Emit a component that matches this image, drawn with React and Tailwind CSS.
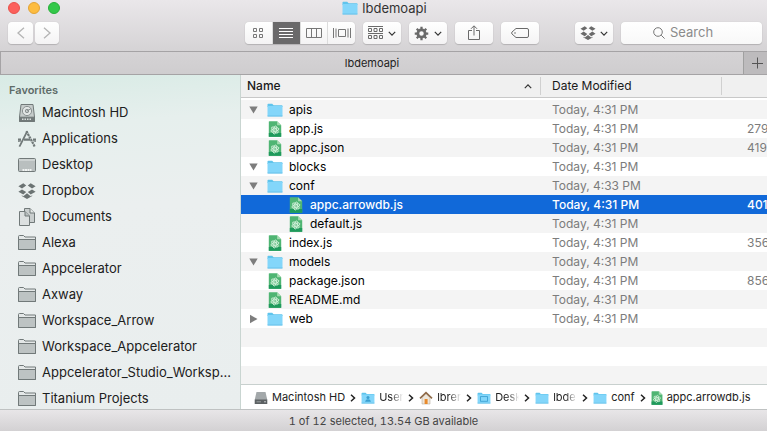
import { useState } from "react";
import clsx from "clsx";

const favorites = [
  { name: "Macintosh HD", icon: "disk" },
  { name: "Applications", icon: "apps" },
  { name: "Desktop", icon: "desktop" },
  { name: "Dropbox", icon: "dropbox" },
  { name: "Documents", icon: "documents" },
  { name: "Alexa", icon: "folder" },
  { name: "Appcelerator", icon: "folder" },
  { name: "Axway", icon: "folder" },
  { name: "Workspace_Arrow", icon: "folder" },
  { name: "Workspace_Appcelerator", icon: "folder" },
  { name: "Appcelerator_Studio_Worksp...", icon: "folder" },
  { name: "Titanium Projects", icon: "folder" },
];

const files = [
  { name: "apis", folder: true, open: true, date: "Today, 4:31 PM" },
  { name: "app.js", date: "Today, 4:31 PM", size: "279" },
  { name: "appc.json", date: "Today, 4:31 PM", size: "419" },
  { name: "blocks", folder: true, open: true, date: "Today, 4:31 PM" },
  { name: "conf", folder: true, open: true, date: "Today, 4:33 PM" },
  { name: "appc.arrowdb.js", nested: true, date: "Today, 4:31 PM", size: "401" },
  { name: "default.js", nested: true, date: "Today, 4:31 PM" },
  { name: "index.js", date: "Today, 4:31 PM", size: "356" },
  { name: "models", folder: true, open: true, date: "Today, 4:31 PM" },
  { name: "package.json", date: "Today, 4:31 PM", size: "856" },
  { name: "README.md", date: "Today, 4:31 PM" },
  { name: "web", folder: true, open: false, date: "Today, 4:31 PM" },
];

function BlueFolder({ mark, className }) {
  return (
    <svg viewBox="0 0 16 14" className={clsx("shrink-0", className)}>
      <path d="M0.5 1.6Q0.5 0.8 1.3 0.8H5.2L6.6 2.2H14.8Q15.5 2.2 15.5 3V4H0.5Z" fill="#5fc4ec" />
      <rect x="0.5" y="3" width="15" height="10.4" rx="0.6" fill="#83d6fa" />
      <path d="M0.5 13H15.5" stroke="#62bde4" strokeWidth="0.8" />
      {mark === "user" && (
        <g fill="#3a9fd0">
          <circle cx="8" cy="6.4" r="1.8" />
          <path d="M4.6 11.4Q5 8.6 8 8.6Q11 8.6 11.4 11.4Z" />
        </g>
      )}
      {mark === "desktop" && (
        <rect x="4" y="5.4" width="8" height="5.4" fill="none" stroke="#3a9fd0" />
      )}
    </svg>
  );
}

function FileIcon({ className }) {
  return (
    <svg viewBox="0 0 13 16" className={clsx("shrink-0", className)}>
      <path d="M0.3 0.8Q0.3 0.2 1 0.2H8.6L12.7 4.2V15.8H0.3Z" fill="#4fb573" />
      <path d="M0.3 12H12.7V15.8H0.3Z" fill="#1f9a5c" />
      <path d="M8.6 0.2L12.7 4.2H8.6Z" fill="#a5dbb0" />
      <g fill="none" stroke="#d8f3df" strokeWidth="0.8">
        <ellipse cx="6.4" cy="9" rx="1.7" ry="4.2" transform="rotate(12 6.4 9)" />
        <ellipse cx="6.4" cy="9" rx="1.7" ry="4.2" transform="rotate(72 6.4 9)" />
        <ellipse cx="6.4" cy="9" rx="1.7" ry="4.2" transform="rotate(132 6.4 9)" />
      </g>
      <circle cx="6.4" cy="9" r="0.8" fill="#eefaf0" />
    </svg>
  );
}

function DropboxIcon({ className }) {
  return (
    <svg viewBox="0 0 18 16" fill="currentColor" className={className}>
      <path d="M5.3 0.3L8.2 2.6L4 5.4L0.4 3.2Z" />
      <path d="M12.7 0.3L9.8 2.6L14 5.4L17.6 3.2Z" />
      <path d="M4 6.4L8.2 9L5.3 11.6L0.4 8.8Z" />
      <path d="M14 6.4L9.8 9L12.7 11.6L17.6 8.8Z" />
      <path d="M9 10.2L12.7 13.2L14.2 12.2V13L9 16L3.8 13V12.2L5.3 13.2Z" />
    </svg>
  );
}

function SidebarIcon({ type }) {
  if (type === "dropbox") {
    return <DropboxIcon className="h-4 w-[18px] shrink-0 text-[#6b7373]" />;
  }
  return (
    <svg
      viewBox="0 0 18 18"
      fill="none"
      stroke="#717979"
      className="h-[18px] w-[18px] shrink-0"
    >
      {type === "disk" && (
        <>
          <path d="M3 0.5H15L16.5 13V17.5H1.5V13Z" fill="#c6cccb" />
          <path d="M1.5 13.2H16.5V17.3H1.5Z" fill="#727a7a" />
          <path d="M4 15.3H14" stroke="#d9dedd" strokeDasharray="1.5 1" strokeWidth="1.6" />
          <circle cx="9" cy="7" r="4.6" fill="#e3e7e6" stroke="#8a9191" />
          <circle cx="9" cy="7" r="1.7" fill="#c6cccb" stroke="#8a9191" />
          <path d="M9 7L13 4.6" stroke="#8a9191" />
        </>
      )}
      {type === "apps" && (
        <>
          <path d="M9.3 1.2L2.6 14.4L1.4 16.6" strokeWidth="1.8" />
          <path d="M8.4 1.2L15.6 14.4L16.6 16.6" strokeWidth="2.2" strokeDasharray="2.4 0.6" />
          <path d="M0 9.6H3M6 9.6H12M15 9.6H18" strokeWidth="2.4" />
          <path d="M0 11.4L3 11M15.6 11L18 11.4" />
        </>
      )}
      {type === "desktop" && (
        <>
          <rect x="0.5" y="2.5" width="17" height="13" rx="1" fill="#b9bfbf" />
          <path d="M1 4H17" stroke="#e2e6e5" />
          <path d="M4.5 14H13.5" stroke="#f0f3f2" strokeWidth="2" strokeDasharray="2 0.5" />
        </>
      )}
      {type === "documents" && (
        <>
          <path d="M6.5 0.5H12L16.5 5V14.5H6.5Z" fill="#c9cece" />
          <path d="M12 0.5V5H16.5" fill="#e6eae9" />
          <path d="M1.5 3.5H7L11.5 8V17.5H1.5Z" fill="#dce0e0" />
          <path d="M7 3.5V8H11.5" fill="#b9bfbf" />
        </>
      )}
      {type === "folder" && (
        <>
          <path d="M0.5 15.5V2.5Q0.5 1.5 1.5 1.5H5.5L7 3H17.5V15.5Z" fill="#e4e8e8" />
          <path d="M0.5 5.5H17.5V15.5H0.5Z" fill="#bdc3c3" />
        </>
      )}
    </svg>
  );
}

function Chevron({ className }) {
  return (
    <svg viewBox="0 0 10 6" fill="none" stroke="#333" strokeWidth="1.5" className={clsx("h-[5px] w-2", className)}>
      <path d="M1 1L5 5L9 1" />
    </svg>
  );
}

function ToolButton({ label, className, children }) {
  return (
    <button
      type="button"
      aria-label={label}
      className={clsx(
        "flex h-[22px] shrink-0 items-center justify-center rounded bg-gradient-to-b from-white to-[#f4f3f4] text-[#6a6a6a] shadow-[0_1px_1px_#b3b1b3,0_0_1px_#bbb]",
        className
      )}
    >
      {children}
    </button>
  );
}

function ViewIcon({ type }) {
  return (
    <svg viewBox="0 0 18 12" fill="none" stroke="currentColor" className="h-3 w-[18px]">
      {type === "icons" && (
        <path d="M4.5 1.5h3v3h-3zM10.5 1.5h3v3h-3zM4.5 7.5h3v3h-3zM10.5 7.5h3v3h-3z" />
      )}
      {type === "list" && <path d="M2 1.5H16M2 4.5H16M2 7.5H16M2 10.5H16" />}
      {type === "columns" && <path d="M1.5 1.5h15v9h-15zM6.5 1.5v9M11.5 1.5v9" />}
      {type === "flow" && <path d="M5.5 2.5h7v7h-7zM0.5 1v10M3 1.5v9M15 1.5v9M17.5 1v10" />}
    </svg>
  );
}

function Toolbar() {
  const [view, setView] = useState("list");
  return (
    <div className="flex items-center gap-2 pt-[6px] pr-[5px] pb-[7px] pl-2">
      <div className="mr-[178px] flex gap-[2px]">
        <ToolButton label="Back" className="w-[25px]">
          <svg viewBox="0 0 8 12" fill="none" stroke="#b4b4b4" strokeWidth="1.3" className="h-3 w-2">
            <path d="M7 0.8L1 6L7 11.2" />
          </svg>
        </ToolButton>
        <ToolButton label="Forward" className="w-6">
          <svg viewBox="0 0 8 12" fill="none" stroke="#b4b4b4" strokeWidth="1.3" className="h-3 w-2">
            <path d="M1 0.8L7 6L1 11.2" />
          </svg>
        </ToolButton>
      </div>
      <div className="flex h-[22px] w-[110px] shrink-0 overflow-hidden rounded bg-gradient-to-b from-white to-[#f4f3f4] shadow-[0_1px_1px_#b3b1b3,0_0_1px_#bbb]">
        {["icons", "list", "columns", "flow"].map((type) => (
          <button
            key={type}
            type="button"
            aria-label={type}
            onClick={() => setView(type)}
            className={clsx(
              "flex flex-1 items-center justify-center border-r border-[#dcdcdc] last:border-r-0",
              view === type ? "bg-[#6a696a] text-white" : "text-[#777]"
            )}
          >
            <ViewIcon type={type} />
          </button>
        ))}
      </div>
      <ToolButton label="Arrange" className="w-[38px] gap-[5px]">
        <svg viewBox="0 0 15 14" fill="none" stroke="currentColor" className="h-[14px] w-[15px]">
          <path d="M0 0.5H15M0 7.5H15" />
          <path d="M0.5 2.5h3v3h-3zM6 2.5h3v3H6zM11.5 2.5h3v3h-3zM0.5 9.5h3v3h-3zM6 9.5h3v3H6zM11.5 9.5h3v3h-3z" />
        </svg>
        <Chevron />
      </ToolButton>
      <ToolButton label="Action" className="w-[38px] gap-[5px]">
        <svg viewBox="0 0 16 16" fill="none" stroke="currentColor" className="h-[15px] w-[15px]">
          <circle cx="8" cy="8" r="3.9" strokeWidth="3" />
          <path
            d="M8 0.8V4M8 12V15.2M0.8 8H4M12 8H15.2M2.9 2.9L5 5M11 11L13.1 13.1M2.9 13.1L5 11M11 5L13.1 2.9"
            strokeWidth="2.4"
          />
        </svg>
        <Chevron />
      </ToolButton>
      <ToolButton label="Share" className="w-[38px]">
        <svg viewBox="0 0 12 16" fill="none" stroke="currentColor" className="h-4 w-3">
          <path d="M4 5.5H0.5V14.5H11.5V5.5H8M6 10.5V1M3 3.8L6 0.8L9 3.8" />
        </svg>
      </ToolButton>
      <ToolButton label="Tags" className="w-[38px]">
        <svg viewBox="0 0 18 10" fill="none" stroke="currentColor" className="h-[10px] w-[18px]">
          <path d="M5 0.5H16Q17.5 0.5 17.5 2V8Q17.5 9.5 16 9.5H5L1 6Q0.2 5 1 4Z" />
          <circle cx="4" cy="5" r="0.8" fill="currentColor" stroke="none" />
        </svg>
      </ToolButton>
      <ToolButton label="Dropbox" className="ml-7 w-[38px] gap-1">
        <DropboxIcon className="h-[14px] w-4" />
        <Chevron />
      </ToolButton>
      <label className="flex h-[22px] min-w-0 flex-1 items-center justify-center gap-[5px] rounded bg-gradient-to-b from-white to-[#f8f8f8] pr-3 shadow-[0_1px_1px_#b3b1b3,0_0_1px_#bbb]">
        <svg viewBox="0 0 12 12" fill="none" stroke="#777" className="h-3 w-3 shrink-0">
          <circle cx="5" cy="5" r="4.3" />
          <path d="M8.2 8.2L11.6 11.6" />
        </svg>
        <input
          type="text"
          aria-label="Search"
          placeholder="Search"
          className="w-12 bg-transparent text-[13px] placeholder-[#8b8b8b] outline-none"
        />
      </label>
    </div>
  );
}

function Sidebar() {
  return (
    <nav className="w-[241px] shrink-0 overflow-hidden border-r border-[#c9d5d1] bg-[linear-gradient(175deg,#d8ebe5_0%,#e6efed_16%,#ebefef_40%,#e9eeee_100%)] pt-[6px]">
      <h2 className="h-[19px] pl-[9px] text-[11px] leading-[18px] font-semibold text-[#5e6b68]">
        Favorites
      </h2>
      <ul>
        {favorites.map((item) => (
          <li key={item.name}>
            <a href="#" className="flex h-[26px] items-center gap-[6px] pl-[18px] text-[13px] whitespace-nowrap text-[#1c2020]">
              <SidebarIcon type={item.icon} />
              {item.name}
            </a>
          </li>
        ))}
      </ul>
    </nav>
  );
}

function FileTable() {
  const [selected, setSelected] = useState("appc.arrowdb.js");
  return (
    <div className="min-h-0 flex-1 overflow-hidden">
      <table className="w-full table-fixed border-separate border-spacing-0 text-[12px]">
        <thead>
          <tr className="h-[23px] bg-[#f0f0f0] text-left text-[#1a1a1a]">
            <th className="border-b border-[#c8c8c8] p-0 font-medium">
              <div className="flex items-center justify-between border-r border-[#d0d0d0] pr-2 pl-[6px]">
                Name
                <Chevron className="rotate-180" />
              </div>
            </th>
            <th className="w-[181px] border-b border-[#c8c8c8] p-0 font-normal">
              <div className="border-r border-[#d0d0d0] pl-[11px]">Date Modified</div>
            </th>
            <th className="w-[45px] border-b border-[#c8c8c8] p-0" aria-label="Size" />
          </tr>
        </thead>
        <tbody>
          <tr className="h-[2px]">
            <td colSpan={3} className="p-0" />
          </tr>
          {files.map((file, i) => {
            const active = file.name === selected;
            return (
              <tr
                key={file.name}
                onClick={() => setSelected(file.name)}
                className={clsx(
                  "h-[19px] leading-[19px]",
                  active && "bg-[#1169d9] font-medium text-white",
                  !active && i % 2 === 0 && "bg-[#f4f4f4]"
                )}
              >
                <td className="p-0">
                  <div className={clsx("flex h-[19px] items-center gap-[6px]", file.nested ? "pl-[47px]" : file.folder ? "pl-2" : "pl-[26px]")}>
                    {file.folder && (
                      <svg viewBox="0 0 10 10" fill="#7d7d7d" className="mr-[2px] h-[10px] w-[10px]">
                        <path d={file.open ? "M0.3 1.5H8.7L4.5 8.5Z" : "M1 0.8L8.5 5L1 9.2Z"} />
                      </svg>
                    )}
                    {file.folder ? <BlueFolder className="h-[14px] w-4" /> : <FileIcon className="h-4 w-4" />}
                    {file.name}
                  </div>
                </td>
                <td className={clsx("p-0 pl-[11px]", !active && "text-[#7c7c7c]")}>{file.date}</td>
                <td className={clsx("p-0 pl-[25px]", !active && "text-[#7c7c7c]")}>{file.size}</td>
              </tr>
            );
          })}
          {[0, 1, 2].map((i) => (
            <tr key={i} className={clsx("h-[19px]", i % 2 === 0 && "bg-[#f4f4f4]")}>
              <td colSpan={3} className="p-0" />
            </tr>
          ))}
        </tbody>
      </table>
    </div>
  );
}

function PathChevron() {
  return (
    <svg viewBox="0 0 6 8" fill="none" stroke="#222" strokeWidth="1.5" className="mx-[5px] h-2 w-[6px] shrink-0">
      <path d="M1 0.8L4.5 4L1 7.2" />
    </svg>
  );
}

function PathItem({ icon, name, faded }) {
  return (
    <li className="flex shrink-0 items-center gap-1">
      {icon}
      <span className={clsx("whitespace-nowrap", faded && "w-6 overflow-hidden [mask-image:linear-gradient(to_right,black_50%,transparent)]")}>
        {name}
      </span>
    </li>
  );
}

function PathBar() {
  return (
    <ul className="flex h-[25px] shrink-0 items-center overflow-hidden border-t border-[#c8d0ce] bg-white pt-px pl-[13px] text-[11px] text-[#222]">
      <PathItem
        name="Macintosh HD"
        icon={
          <svg viewBox="0 0 14 14" className="h-[14px] w-[14px]">
            <path d="M2.5 1H11.5L13.2 8.5V13H0.8V8.5Z" fill="#a3a8aa" />
            <path d="M0.8 8.5H13.2V13H0.8Z" fill="#5c6163" />
            <path d="M2.5 10.8H7" stroke="#999fa1" />
            <circle cx="11" cy="10.8" r="0.8" fill="#d0d3d4" />
          </svg>
        }
      />
      <PathChevron />
      <PathItem name="User" faded icon={<BlueFolder mark="user" className="h-3 w-[14px]" />} />
      <PathChevron />
      <PathItem
        name="lbren"
        faded
        icon={
          <svg viewBox="0 0 14 14" className="h-[14px] w-[14px]">
            <path d="M3 6.5L7 2.5L11 6.5V13H3Z" fill="#eee6da" stroke="#a89c8c" strokeWidth="0.5" />
            <path d="M1 7.4L7 1.6L13 7.4" fill="none" stroke="#8f6a48" strokeWidth="1.6" />
            <path d="M5.6 8H8.6V13H5.6Z" fill="#e88a2c" />
          </svg>
        }
      />
      <PathChevron />
      <PathItem name="Desk" faded icon={<BlueFolder mark="desktop" className="h-3 w-[14px]" />} />
      <PathChevron />
      <PathItem name="lbde" faded icon={<BlueFolder className="h-3 w-[14px]" />} />
      <PathChevron />
      <PathItem name="conf" icon={<BlueFolder className="h-3 w-[14px]" />} />
      <PathChevron />
      <PathItem name="appc.arrowdb.js" icon={<FileIcon className="h-[14px] w-3" />} />
    </ul>
  );
}

function App() {
  return (
    <div className="flex h-screen flex-col overflow-hidden bg-white font-['Inter','Liberation_Sans',sans-serif]">
      <header className="shrink-0 bg-gradient-to-b from-[#eae7ea] to-[#d5d3d5]">
        <div className="grid h-4 grid-cols-[1fr_auto_1fr] items-center pl-2">
          <div className="flex gap-2">
            <button type="button" aria-label="Close" className="h-3 w-3 rounded-full border border-[#e9524c] bg-[#fc605c]" />
            <button type="button" aria-label="Minimize" className="h-3 w-3 rounded-full border border-[#e3a335] bg-[#fdbc40]" />
            <button type="button" aria-label="Zoom" className="h-3 w-3 rounded-full border border-[#27b039] bg-[#34c84a]" />
          </div>
          <h1 className="flex items-center gap-1 pr-[6px] text-[13px] leading-4 text-[#333]">
            <BlueFolder className="h-[14px] w-4" />
            lbdemoapi
          </h1>
        </div>
        <Toolbar />
      </header>
      <div className="flex h-6 shrink-0 border-y border-l border-[#a5a3a5] bg-gradient-to-b from-[#d5d3d5] to-[#cfcdcf]">
        <button type="button" className="flex-1 text-[11px] text-[#222]">
          lbdemoapi
        </button>
        <button type="button" aria-label="New tab" className="flex w-6 items-center justify-end border-l border-[#a0a0a0] bg-[#bdbbbd] pr-1">
          <svg viewBox="0 0 12 12" stroke="#555" className="h-3 w-3">
            <path d="M6.5 0.5V11.5M1 6.5H12" />
          </svg>
        </button>
      </div>
      <main className="flex min-h-0 flex-1">
        <Sidebar />
        <section className="flex min-w-0 flex-1 flex-col">
          <FileTable />
          <PathBar />
        </section>
      </main>
      <footer className="h-[22px] shrink-0 border-t border-[#bfc2c2] bg-gradient-to-b from-[#e8e6e8] to-[#d3d1d3] text-center text-[11px] leading-[22px] text-[#444] tabular-nums">
        1 of 12 selected, 13.54 GB available
      </footer>
    </div>
  );
}

export default App;
